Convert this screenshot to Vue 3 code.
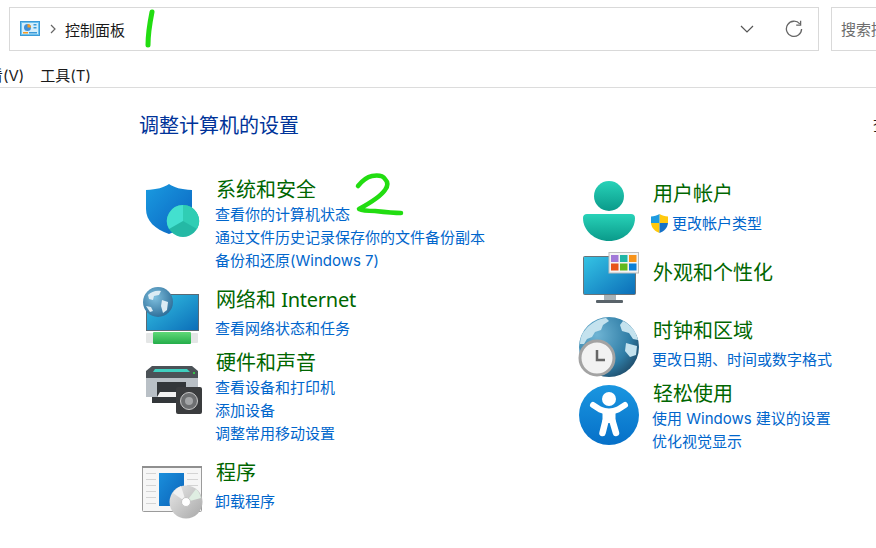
<template>
  <div class="page">
    <div class="topbar">
      <div class="address">
        <svg class="address__icon" width="20" height="16" viewBox="0 0 20 16">
          <rect x="0.5" y="0.5" width="19" height="14" fill="#6ec3ee" stroke="#3a9ad9" />
          <rect x="2" y="2" width="16" height="11" fill="#d5eefb" />
          <circle cx="7.500" cy="6.500" r="3.500" fill="#3f8fd8" />
          <path d="M7.500 6.500V3a3.500 3.500 0 0 1 3.500 3.500z" fill="#f59a23" />
          <rect x="13.500" y="3" width="3" height="1.500" fill="#3a9ad9" />
          <rect x="13.500" y="6" width="3" height="1.500" fill="#3a9ad9" />
          <rect x="3" y="11" width="5" height="1.500" fill="#f59a23" />
          <rect x="9" y="11" width="8" height="1.500" fill="#3a9ad9" />
        </svg>
        <svg class="address__sep" width="6" height="10" viewBox="0 0 6 10">
          <path d="M1 1l4 4-4 4" fill="none" stroke="#666" stroke-width="1.2" />
        </svg>
        <span class="address__text">控制面板</span>
        <svg class="address__chevron" width="14" height="8" viewBox="0 0 14 8">
          <path d="M1 1l6 6 6-6" fill="none" stroke="#555" stroke-width="1.2" />
        </svg>
        <svg class="address__refresh" width="18" height="18" viewBox="0 0 18 18">
          <path d="M14.8 3.9A7.6 7.6 0 1 0 16.6 9" fill="none" stroke="#666" stroke-width="1.3" />
          <path d="M15.6 0.8v4.4h-4.4" fill="none" stroke="#666" stroke-width="1.3" />
        </svg>
      </div>
      <div class="search">搜索控制面板</div>
    </div>

    <div class="menu">
      <span class="menu__item menu__item--view">查看(V)</span>
      <span class="menu__item">工具(T)</span>
    </div>

    <div class="heading-row">
      <h1 class="heading">调整计算机的设置</h1>
      <span class="view-by">查看方式</span>
    </div>

    <div class="panel">
      <div class="column column--left">
        <section class="cat cat--security">
          <svg class="cat__icon" width="64" height="56" viewBox="0 0 64 56">
            <defs>
              <linearGradient id="shieldFill" x1="0" y1="0" x2="1" y2="1">
                <stop offset="0" stop-color="#1a9be0" />
                <stop offset="1" stop-color="#0a62c0" />
              </linearGradient>
            </defs>
            <path d="M29 0c5 3.500 12 5.500 23 6v19c0 12-9 20-23 25C15 45 6 37 6 25V6c11-.5 18-2.500 23-6z" fill="url(#shieldFill)" />
            <circle cx="43" cy="37" r="16" fill="#24b9a5" />
            <path d="M43 37V21a16 16 0 0 1 14 24z" fill="#30cdb4" />
            <path d="M43 37V21a16 16 0 0 0-14 24z" fill="#43e0cf" />
          </svg>
          <div class="cat__body">
            <a class="cat__title">系统和安全</a>
            <a class="cat__link">查看你的计算机状态</a>
            <a class="cat__link">通过文件历史记录保存你的文件备份副本</a>
            <a class="cat__link">备份和还原(Windows 7)</a>
          </div>
        </section>

        <section class="cat cat--network">
          <svg class="cat__icon" width="64" height="60" viewBox="0 0 64 60">
            <defs>
              <linearGradient id="screenFill" x1="0" y1="0" x2="1" y2="1">
                <stop offset="0" stop-color="#35c4e4" />
                <stop offset="1" stop-color="#0b6db8" />
              </linearGradient>
              <radialGradient id="netGlobe" cx="0.4" cy="0.35" r="0.8">
                <stop offset="0" stop-color="#7fc0df" />
                <stop offset="1" stop-color="#1f5f8c" />
              </radialGradient>
              <linearGradient id="barFill" x1="0" y1="0" x2="0" y2="1">
                <stop offset="0" stop-color="#5fd978" />
                <stop offset="1" stop-color="#24ad4a" />
              </linearGradient>
            </defs>
            <rect x="6.500" y="8.500" width="52" height="36" fill="url(#screenFill)" stroke="#5a6a75" />
            <rect x="6" y="47" width="52" height="10" rx="1" fill="#e4e6e6" />
            <rect x="13" y="46" width="38" height="12" rx="1" fill="url(#barFill)" />
            <circle cx="18" cy="16" r="15" fill="url(#netGlobe)" />
            <path d="M8 9c3-3 8-5 13-4l-2 4-5 1-1 4-4-1zM22 14l6 2-1 8-4 3-2-7zM6 20l5 1 2 4-3 1z" fill="#dcecf4" />
          </svg>
          <div class="cat__body">
            <a class="cat__title">网络和 <span class="cat__latin">Internet</span></a>
            <a class="cat__link">查看网络状态和任务</a>
          </div>
        </section>

        <section class="cat cat--hardware">
          <svg class="cat__icon" width="64" height="50" viewBox="0 0 64 50">
            <path d="M12 0h40l6 5v8H6V5z" fill="#4b5257" />
            <path d="M15 3h32l3 3H13z" fill="#3fd0c0" />
            <rect x="6" y="12" width="52" height="19" fill="#b9c0c6" />
            <rect x="17" y="16" width="29" height="15" fill="#33373a" />
            <rect x="53" y="6" width="2" height="2" fill="#35c44a" />
            <rect x="12" y="31" width="36" height="6" fill="#33373a" />
            <path d="M20 26h24v5H17z" fill="#f2f2f2" />
            <rect x="36" y="21" width="26" height="27" rx="2" fill="#3a3c3e" />
            <circle cx="49" cy="35" r="8.500" fill="#6d6f71" stroke="#c8c8c8" />
            <circle cx="49" cy="35" r="4" fill="#a3a5a7" />
          </svg>
          <div class="cat__body">
            <a class="cat__title">硬件和声音</a>
            <a class="cat__link">查看设备和打印机</a>
            <a class="cat__link">添加设备</a>
            <a class="cat__link">调整常用移动设置</a>
          </div>
        </section>

        <section class="cat cat--programs">
          <svg class="cat__icon" width="64" height="56" viewBox="0 0 64 56">
            <defs>
              <linearGradient id="discFill" x1="0" y1="0" x2="1" y2="1">
                <stop offset="0" stop-color="#e8e8e8" />
                <stop offset="1" stop-color="#a8a8a8" />
              </linearGradient>
              <linearGradient id="docFill" x1="0" y1="0" x2="1" y2="1">
                <stop offset="0" stop-color="#1a8fdc" />
                <stop offset="1" stop-color="#0b62b8" />
              </linearGradient>
            </defs>
            <rect x="2.500" y="0.500" width="59" height="45" rx="1" fill="#f6f6f6" stroke="#9b9b9b" />
            <rect x="2" y="0" width="60" height="2" fill="#8f8f8f" />
            <g fill="#d4d4d4">
              <rect x="6" y="7" width="10" height="1" />
              <rect x="6" y="13" width="10" height="1" />
              <rect x="6" y="19" width="10" height="1" />
              <rect x="6" y="25" width="10" height="1" />
              <rect x="6" y="31" width="10" height="1" />
              <rect x="6" y="37" width="10" height="1" />
              <rect x="47" y="7" width="11" height="1" />
              <rect x="47" y="13" width="11" height="1" />
              <rect x="47" y="19" width="11" height="1" />
              <rect x="47" y="25" width="11" height="1" />
            </g>
            <rect x="19" y="7" width="25" height="33" fill="url(#docFill)" />
            <circle cx="46" cy="36" r="16.500" fill="url(#discFill)" />
            <path d="M46 36L33 27a16.500 16.500 0 0 1 8-7z" fill="#f1f1f1" />
            <path d="M46 36l10-13a16.500 16.500 0 0 1 5 9z" fill="#dfeee2" />
            <circle cx="46" cy="36" r="4.500" fill="#fff" stroke="#c4c4c4" />
          </svg>
          <div class="cat__body">
            <a class="cat__title">程序</a>
            <a class="cat__link">卸载程序</a>
          </div>
        </section>
      </div>

      <div class="column column--right">
        <section class="cat cat--user">
          <svg class="cat__icon" width="62" height="62" viewBox="0 0 62 62">
            <defs>
              <linearGradient id="tealFill" x1="0" y1="0" x2="0" y2="1">
                <stop offset="0" stop-color="#28d2b8" />
                <stop offset="1" stop-color="#0a9a8a" />
              </linearGradient>
            </defs>
            <circle cx="31" cy="15" r="15" fill="url(#tealFill)" />
            <path d="M9 33h44c2.500 0 4 1.500 4 4 0 13-12 23-26 23S5 50 5 37c0-2.500 1.500-4 4-4z" fill="url(#tealFill)" />
          </svg>
          <div class="cat__body">
            <a class="cat__title">用户帐户</a>
            <a class="cat__link cat__link--shield">
              <svg class="uac" width="19" height="19" viewBox="0 0 19 19">
                <path d="M9.500 0C12 1.500 15 2.500 18 2.500V9H9.500z" fill="#ffc90e" />
                <path d="M9.500 0C7 1.500 4 2.500 1 2.500V9h8.500z" fill="#1e9be0" />
                <path d="M1 9h8.500v10C5 17.500 1.500 14 1 9z" fill="#ffc90e" />
                <path d="M18 9H9.500v10c4.500-1.500 8-5 8.500-10z" fill="#1672c8" />
              </svg>更改帐户类型</a>
          </div>
        </section>

        <section class="cat cat--appearance">
          <svg class="cat__icon" width="64" height="54" viewBox="0 0 64 54">
            <rect x="5.500" y="4.500" width="52" height="38" rx="1" fill="url(#screenFill)" stroke="#6a7378" />
            <rect x="26" y="43" width="12" height="6" fill="#a9b3b8" />
            <rect x="18" y="48" width="27" height="3" rx="1" fill="#59636a" />
            <rect x="31" y="0.500" width="29.500" height="20.500" fill="#f4f4f4" stroke="#bdbdbd" />
            <rect x="33" y="3" width="7.500" height="7" fill="#a178d8" />
            <rect x="42" y="3" width="7.500" height="7" fill="#1fb5a5" />
            <rect x="51" y="3" width="7.500" height="7" fill="#f7931a" />
            <rect x="33" y="11.500" width="7.500" height="7" fill="#e8541a" />
            <rect x="42" y="11.500" width="7.500" height="7" fill="#62b81c" />
            <rect x="51" y="11.500" width="7.500" height="7" fill="#0a7fd8" />
          </svg>
          <div class="cat__body">
            <a class="cat__title">外观和个性化</a>
          </div>
        </section>

        <section class="cat cat--clock">
          <svg class="cat__icon" width="62" height="62" viewBox="0 0 62 62">
            <defs>
              <radialGradient id="clockGlobe" cx="0.3" cy="0.3" r="0.85">
                <stop offset="0" stop-color="#6fb4d4" />
                <stop offset="0.65" stop-color="#2f7da6" />
                <stop offset="1" stop-color="#1c4460" />
              </radialGradient>
            </defs>
            <circle cx="31" cy="30" r="30" fill="url(#clockGlobe)" />
            <path d="M8 12c5-6 12-10 20-11l3 3-6 4-2 5-6 2-3 5-5 2-3 5H2c0-6 2-11 6-15zM45 4c8 4 13 10 15 19l-5-1-4-6-7-2-2-6zM48 26l11 3-1 9-6 2-5-6z" fill="#c4e2ee" />
            <circle cx="19" cy="41" r="17" fill="#f2f2f2" stroke="#a3a3a3" stroke-width="3" />
            <path d="M19 33v10h8" fill="none" stroke="#666" stroke-width="2.500" />
          </svg>
          <div class="cat__body">
            <a class="cat__title">时钟和区域</a>
            <a class="cat__link">更改日期、时间或数字格式</a>
          </div>
        </section>

        <section class="cat cat--access">
          <svg class="cat__icon" width="62" height="62" viewBox="0 0 62 62">
            <defs>
              <linearGradient id="accessFill" x1="0" y1="0" x2="0" y2="1">
                <stop offset="0" stop-color="#1a96e0" />
                <stop offset="1" stop-color="#0670c8" />
              </linearGradient>
            </defs>
            <circle cx="31" cy="30" r="30" fill="url(#accessFill)" />
            <circle cx="31" cy="14" r="7" fill="#fff" />
            <path d="M15 20l7 4.500c5.500 2.500 12.500 2.500 18 0l7-4.500" fill="none" stroke="#fff" stroke-width="6" stroke-linecap="round" stroke-linejoin="round" />
            <rect x="24.500" y="25" width="13" height="13" fill="#fff" />
            <path d="M27.500 36L24.500 48M34.500 36L38 48" fill="none" stroke="#fff" stroke-width="6.500" stroke-linecap="round" />
          </svg>
          <div class="cat__body">
            <a class="cat__title">轻松使用</a>
            <a class="cat__link">使用 Windows 建议的设置</a>
            <a class="cat__link">优化视觉显示</a>
          </div>
        </section>
      </div>
    </div>

    <!-- hand-drawn marks on top of the screenshot -->
    <svg class="mark" width="876" height="548" viewBox="0 0 876 548">
      <path d="M152 12c-2 10-4 22-4 33" fill="none" stroke="#22dd11" stroke-width="5" stroke-linecap="round" />
      <path d="M358 186c4-5 9-9 14-10 6-1 11 0 13 3 3 3 3 7 0 11-4 6-15 13-26 19 4 2 10 2 16 2 9 1 19 2 26 2" fill="none" stroke="#22dd11" stroke-width="4.500" stroke-linecap="round" stroke-linejoin="round" />
    </svg>
  </div>
</template>

<script setup>
</script>

<style>
html,
body {
  margin: 0;
  background: #fff;
}
</style>

<style scoped>
.page {
  position: relative;
  width: 876px;
  height: 548px;
  overflow: hidden;
  background: #fff;
  font-family: "Noto Sans", "Noto Sans CJK SC", sans-serif;
}

.topbar {
  display: flex;
  gap: 12px;
  padding: 7px 0 0 9px;
}

.address {
  display: flex;
  flex: none;
  align-items: center;
  box-sizing: border-box;
  width: 810px;
  height: 44px;
  padding: 0 15px 0 10px;
  border: 1px solid #d9d9d9;
}

.address__sep {
  margin-left: 10px;
}

.address__text {
  margin-left: 9px;
  font-size: 15px;
  color: #1a1a1a;
}

.address__chevron {
  margin-left: auto;
  margin-right: -1px;
}

.address__refresh {
  margin-left: 32px;
}

.search {
  flex: none;
  box-sizing: border-box;
  width: 120px;
  height: 44px;
  padding-left: 9px;
  border: 1px solid #d9d9d9;
  font-size: 15px;
  line-height: 42px;
  color: #6d6d6d;
  white-space: nowrap;
}

.menu {
  display: flex;
  box-sizing: border-box;
  height: 37px;
  padding-top: 14px;
  border-bottom: 1px solid #dcdcdc;
  font-family: Inter, "Noto Sans CJK SC", sans-serif;
  font-size: 15px;
  line-height: 22px;
  color: #1a1a1a;
}

.menu__item {
  white-space: nowrap;
}

.menu__item--view {
  margin-left: -27px;
  margin-right: 16px;
}

.heading-row {
  display: flex;
  justify-content: space-between;
  height: 89px;
  padding-left: 139px;
}

.heading {
  margin: 24px 0 0;
  font-size: 20px;
  font-weight: 400;
  line-height: 28px;
  color: #003399;
}

.view-by {
  flex: none;
  width: 3px;
  margin-top: 26px;
  font-size: 15px;
  line-height: 22px;
  color: #1a1a1a;
  white-space: nowrap;
}

.panel {
  display: flex;
  padding-left: 140px;
}

.column--left {
  flex: none;
  width: 438px;
}

.column--right {
  flex: none;
  margin-top: 4px;
}

.cat {
  display: flex;
  align-items: flex-start;
}

.cat__icon {
  flex: none;
  display: block;
}

.cat__body {
  display: flex;
  flex-direction: column;
}

.cat__title {
  font-family: "Noto Sans", "Noto Sans CJK SC", sans-serif;
  font-size: 20px;
  line-height: 26px;
  color: #006600;
  white-space: nowrap;
}

.cat__latin {
  letter-spacing: -0.25px;
}

.cat__link {
  margin-left: -1px;
  font-family: Inter, "Noto Sans CJK SC", sans-serif;
  font-size: 15px;
  line-height: 23px;
  color: #0066cc;
  white-space: nowrap;
}

.cat__link--shield {
  display: flex;
  align-items: center;
  margin-left: -3px;
}

.uac {
  margin-right: 3px;
}

.column--left .cat__icon {
  margin-right: 12px;
}

.column--right .cat__icon {
  margin-right: 13px;
}

.cat--security {
  height: 110px;
}

.cat--security .cat__icon {
  margin-top: 7px;
}

.cat--network {
  height: 63px;
}

.cat--network .cat__icon {
  margin-top: -1px;
}

.cat--network .cat__title,
.cat--clock .cat__title {
  margin-bottom: 4px;
}

.cat--user .cat__title {
  margin-bottom: 5px;
}

.cat--programs .cat__title {
  margin-top: 1px;
  margin-bottom: 4px;
}

.cat--hardware {
  height: 109px;
}

.cat--hardware .cat__icon {
  margin-top: 16px;
}

.cat--programs .cat__icon {
  margin-top: 7px;
}

.cat--user {
  height: 79px;
}

.cat--appearance {
  height: 58px;
}

.cat--appearance .cat__icon {
  margin-top: -8px;
  margin-right: 11px;
}

.cat--clock {
  height: 63px;
}

.cat--clock .cat__icon {
  margin-top: -1px;
}

.cat--access .cat__icon {
  margin-top: 4px;
}

.mark {
  position: absolute;
  top: 0;
  left: 0;
  pointer-events: none;
}
</style>
